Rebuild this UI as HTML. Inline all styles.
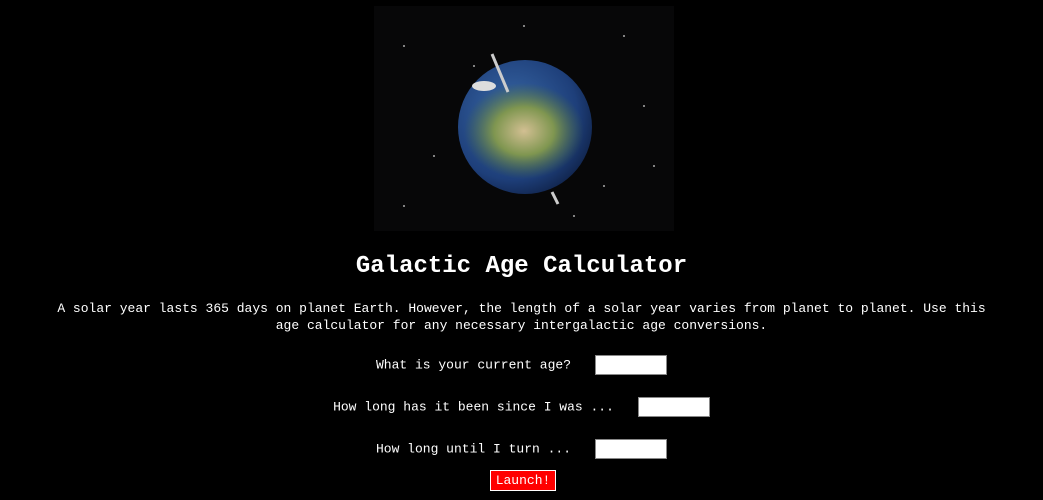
<!DOCTYPE html>
<html><head><style>
body{margin:0;background:#000;color:#fff;font-family:"Liberation Mono","DejaVu Sans Mono",monospace;width:1043px;height:500px;overflow:hidden;position:relative}
.img{position:absolute;left:374px;top:6px;width:300px;height:225px;background:#070708}
h1{position:absolute;top:252px;left:0;width:1043px;text-align:center;margin:0;font-size:24px;font-weight:bold;line-height:30px}
p{position:absolute;top:300px;left:51px;width:941px;text-align:center;margin:0;font-size:13px;line-height:17px}
.row{position:absolute;left:0;width:1043px;text-align:center;font-size:13px;height:20px;line-height:20px}
.row input{display:inline-block;width:70px;height:18px;border:1px solid #888;background:#fff;margin-left:24px;vertical-align:middle;padding:0}
.btn{position:absolute;left:490px;top:470px;width:64px;height:19px;border:1px solid #fff;background:#f00;color:#fff;font-size:13px;text-align:center;line-height:19px}
</style></head><body>
<div class="img"><svg width="300" height="225">
<defs><radialGradient id="g" cx="0.4" cy="0.4" r="0.7"><stop offset="0" stop-color="#3a6aa8"/><stop offset="0.7" stop-color="#1e3f7a"/><stop offset="1" stop-color="#0d1d40"/></radialGradient>
<radialGradient id="l" cx="0.5" cy="0.5" r="0.5"><stop offset="0" stop-color="#d2bf92"/><stop offset="0.5" stop-color="#7f9650"/><stop offset="1" stop-color="#4e6e38" stop-opacity="0"/></radialGradient></defs>
<g fill="#aaa"><circle cx="30" cy="40" r="1"/><circle cx="250" cy="30" r="1"/><circle cx="270" cy="100" r="1"/><circle cx="60" cy="150" r="1"/><circle cx="30" cy="200" r="1"/><circle cx="230" cy="180" r="1"/><circle cx="100" cy="60" r="1"/><circle cx="280" cy="160" r="1"/><circle cx="150" cy="20" r="1"/><circle cx="200" cy="210" r="1"/></g>
<circle cx="151" cy="121" r="67" fill="url(#g)"/>
<ellipse cx="150" cy="125" rx="60" ry="48" fill="url(#l)"/>
<ellipse cx="110" cy="80" rx="12" ry="5" fill="#ddd"/>
<line x1="118" y1="48" x2="134" y2="86" stroke="#ccc" stroke-width="3"/>
<line x1="178" y1="186" x2="184" y2="198" stroke="#ccc" stroke-width="3"/>
</svg></div>
<h1>Galactic Age Calculator</h1>
<p>A solar year lasts 365 days on planet Earth. However, the length of a solar year varies from planet to planet. Use this age calculator for any necessary intergalactic age conversions.</p>
<div class="row" style="top:355px">What is your current age?<input></div>
<div class="row" style="top:397px">How long has it been since I was ...<input></div>
<div class="row" style="top:439px">How long until I turn ...<input></div>
<div class="btn">Launch!</div>
</body></html>
